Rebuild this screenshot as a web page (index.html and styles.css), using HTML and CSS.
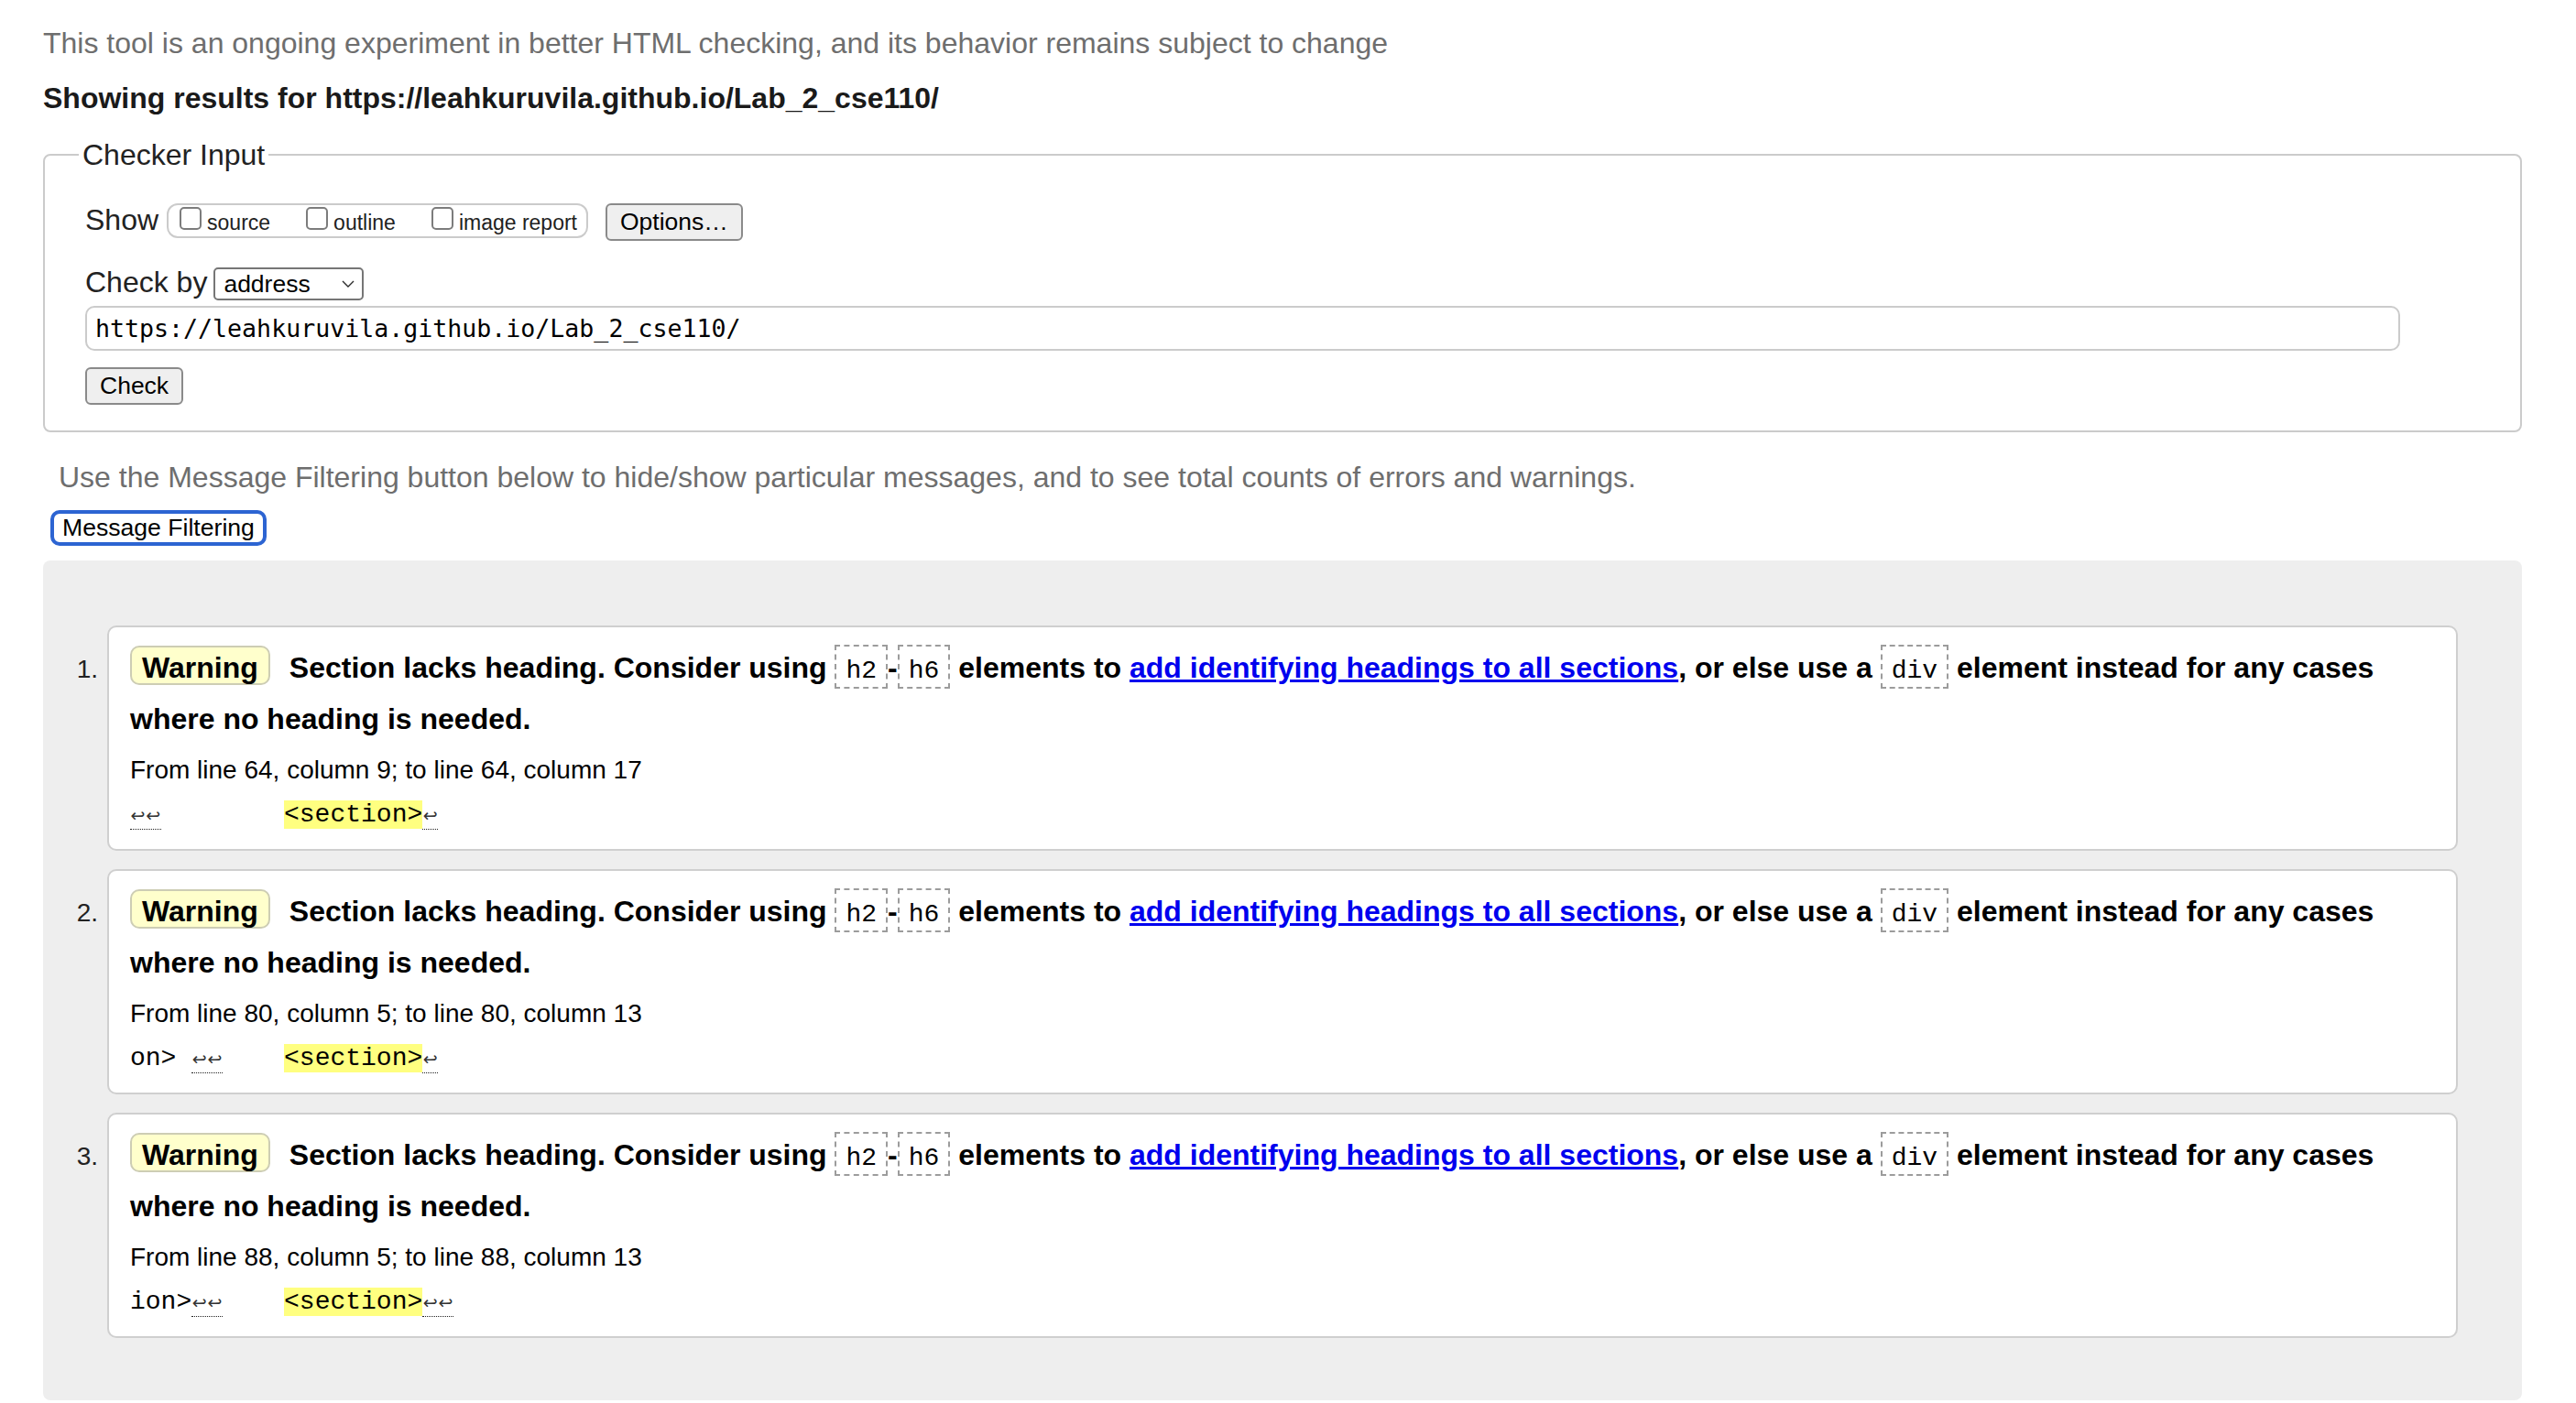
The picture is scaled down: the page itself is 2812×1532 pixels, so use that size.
FILE: index.html
```html
<!DOCTYPE html>
<html lang="en">
<head>
<meta charset="utf-8">
<title>Nu Html Checker</title>
<link rel="stylesheet" href="styles.css">
</head>
<body>
<div class="page">
  <p class="intro">This tool is an ongoing experiment in better HTML checking, and its behavior remains subject to change</p>
  <h2 class="results-title">Showing results for https://leahkuruvila.github.io/Lab_2_cse110/</h2>

  <fieldset class="checker">
    <legend>Checker Input</legend>
    <div class="row row-show">
      <span class="lbl">Show</span><span class="showgroup"><label class="opt"><input type="checkbox" class="cb">source</label><label class="opt"><input type="checkbox" class="cb">outline</label><label class="opt"><input type="checkbox" class="cb">image report</label></span><button type="button" class="btn btn-options">Options…</button>
    </div>
    <div class="row row-by">
      <span class="lbl">Check by</span><span class="select"><span class="select-val">address</span><svg class="chev" width="14" height="8" viewBox="0 0 14 8"><path d="M1 1 L7 7 L13 1" fill="none" stroke="#2b2b2b" stroke-width="1.4"/></svg></span>
    </div>
    <input class="url" type="text" value="https://leahkuruvila.github.io/Lab_2_cse110/">
    <div class="row-check"><button type="button" class="btn">Check</button></div>
  </fieldset>

  <p class="filter-note">Use the Message Filtering button below to hide/show particular messages, and to see total counts of errors and warnings.</p>
  <div class="filter-wrap"><button type="button" class="btn-filter">Message Filtering</button></div>

  <div class="results">
    <ol class="msgs">
      <li class="msg">
        <span class="num">1.</span>
        <div class="card">
          <p class="message"><strong class="badge">Warning</strong>Section lacks heading. Consider using <code class="el">h2</code>-<code class="el">h6</code> elements to <a href="#">add identifying headings to all sections</a>, or else use a <code class="el">div</code> element instead for any cases where no heading is needed.</p>
          <p class="location">From line 64, column 9; to line 64, column 17</p>
          <p class="extract"><span class="lf"><i>↩</i><i>↩</i></span>        <b class="hl">&lt;section&gt;</b><span class="lf"><i>↩</i></span></p>
        </div>
      </li>
      <li class="msg">
        <span class="num">2.</span>
        <div class="card">
          <p class="message"><strong class="badge">Warning</strong>Section lacks heading. Consider using <code class="el">h2</code>-<code class="el">h6</code> elements to <a href="#">add identifying headings to all sections</a>, or else use a <code class="el">div</code> element instead for any cases where no heading is needed.</p>
          <p class="location">From line 80, column 5; to line 80, column 13</p>
          <p class="extract">on> <span class="lf"><i>↩</i><i>↩</i></span>    <b class="hl">&lt;section&gt;</b><span class="lf"><i>↩</i></span></p>
        </div>
      </li>
      <li class="msg">
        <span class="num">3.</span>
        <div class="card">
          <p class="message"><strong class="badge">Warning</strong>Section lacks heading. Consider using <code class="el">h2</code>-<code class="el">h6</code> elements to <a href="#">add identifying headings to all sections</a>, or else use a <code class="el">div</code> element instead for any cases where no heading is needed.</p>
          <p class="location">From line 88, column 5; to line 88, column 13</p>
          <p class="extract">ion><span class="lf"><i>↩</i><i>↩</i></span>    <b class="hl">&lt;section&gt;</b><span class="lf"><i>↩</i><i>↩</i></span></p>
        </div>
      </li>
    </ol>
  </div>
</div>
</body>
</html>
```
FILE: styles.css
```css
* { box-sizing: border-box; }
html, body { margin: 0; background: #fff; }
body {
  font-family: "Liberation Sans", Arial, Helvetica, sans-serif;
  font-size: 32px;
  color: #222;
}
.page { padding: 27px 59px 0 47px; }

.intro { margin: 0; line-height: 40px; color: #6e6e6e; }
.results-title {
  margin: 20px 0 0;
  font-size: 32px;
  font-weight: bold;
  line-height: 40px;
  color: #1a1a1a;
}

.checker {
  margin: 22px 0 0;
  border: 2px solid #cbcbcb;
  border-radius: 8px;
  padding: 31px 44px 28px;
  min-inline-size: auto;
}
.checker legend {
  padding: 0 4px;
  margin-left: -7px;
  font-size: 32px;
  line-height: 40px;
  color: #222;
}

.row { display: flex; align-items: baseline; line-height: 40px; }
.lbl { color: #222; }
.row-show .lbl { margin-right: 9px; }
.row-by { margin-top: 25px; }

.showgroup {
  display: block;
  height: 38px;
  padding: 2px 10px 0 12px;
  border: 2px solid #cbcbcb;
  border-radius: 12px;
  font-size: 23px;
  line-height: 32px;
  white-space: nowrap;
  color: #222;
}
.opt + .opt { margin-left: 39px; }
.cb {
  -webkit-appearance: none;
  appearance: none;
  display: inline-block;
  width: 24px;
  height: 25px;
  margin: 0 6px 0 0;
  border: 2px solid #7c7c7c;
  border-radius: 5px;
  background: #fff;
  vertical-align: baseline;
}

.btn {
  font-family: "Liberation Sans", Arial, sans-serif;
  font-size: 26.5px;
  line-height: 33px;
  padding: 2px 14px;
  border: 2px solid #8a8a8a;
  border-radius: 6px;
  background: #efefef;
  color: #000;
}
.btn-options { margin-left: 19px; }

.select {
  display: inline-flex;
  align-items: center;
  justify-content: space-between;
  width: 164px;
  height: 36px;
  margin-left: 7px;
  padding: 0 8px 0 9px;
  border: 2px solid #767676;
  border-radius: 5px;
  font-size: 26.5px;
  line-height: 32px;
  color: #000;
}
.chev { display: block; }

.url {
  display: block;
  width: calc(100% - 87px);
  height: 49px;
  margin: 6px 0 0;
  padding: 0 9px;
  border: 2px solid #cbcbcb;
  border-radius: 10px;
  font-family: "DejaVu Sans Mono", monospace;
  font-size: 26.6px;
  color: #000;
  background: #fff;
}
.row-check { display: flex; margin-top: 18px; }

.filter-note {
  margin: 29px 0 0 17px;
  line-height: 40px;
  color: #6e6e6e;
}
.filter-wrap { display: flex; margin-top: 16px; padding-left: 8px; }
.btn-filter {
  font-family: "Liberation Sans", Arial, sans-serif;
  font-size: 26.6px;
  line-height: 31px;
  padding: 0 9px;
  border: 4px solid #2c64d2;
  border-radius: 10px;
  background: #fff;
  color: #000;
}

.results {
  margin-top: 16px;
  background: #eeeeee;
  border-radius: 8px;
  padding: 71px 70px 68px 0;
}
.msgs {
  list-style: none;
  margin: 0;
  padding: 0;
  display: flex;
  flex-direction: column;
  gap: 20px;
}
.msg {
  display: grid;
  grid-template-columns: 70px 1fr;
  align-items: baseline;
  font-size: 28px;
}
.num {
  text-align: right;
  padding-right: 10px;
  line-height: 40px;
  color: #222;
}
.card {
  background: #fff;
  border: 2px solid #cfcfcf;
  border-radius: 10px;
  padding: 16px 23px 17px;
}
.message {
  margin: 0;
  font-size: 32px;
  font-weight: bold;
  line-height: 56px;
  color: #000;
}
.badge {
  display: inline-block;
  margin-right: 21px;
  padding: 6px 11px 1px;
  border: 2px solid #cdcdb4;
  border-radius: 10px;
  background: #ffffcc;
  line-height: 32px;
}
.el {
  font-family: "Liberation Mono", "DejaVu Sans Mono", monospace;
  font-weight: normal;
  font-size: 28px;
  line-height: 28px;
  padding: 11px 10px 2px;
  border: 2px dashed #9c9c9c;
}
.message a { color: #0000ee; text-decoration: underline; }
.location {
  margin: 8px 0 0;
  font-size: 28px;
  line-height: 40px;
  color: #000;
}
.extract {
  margin: 9px 0 0;
  font-family: "Liberation Mono", "DejaVu Sans Mono", monospace;
  font-size: 28px;
  line-height: 40px;
  white-space: pre;
  color: #000;
}
.hl { background: #ffff80; font-weight: normal; }
.lf { border-bottom: 1px dotted #222; }
.lf i {
  display: inline-block;
  width: 16.8px;
  font-style: normal;
  font-family: "DejaVu Sans", sans-serif;
  font-size: 19px;
  line-height: 19px;
  text-align: center;
  color: #333;
}
```
